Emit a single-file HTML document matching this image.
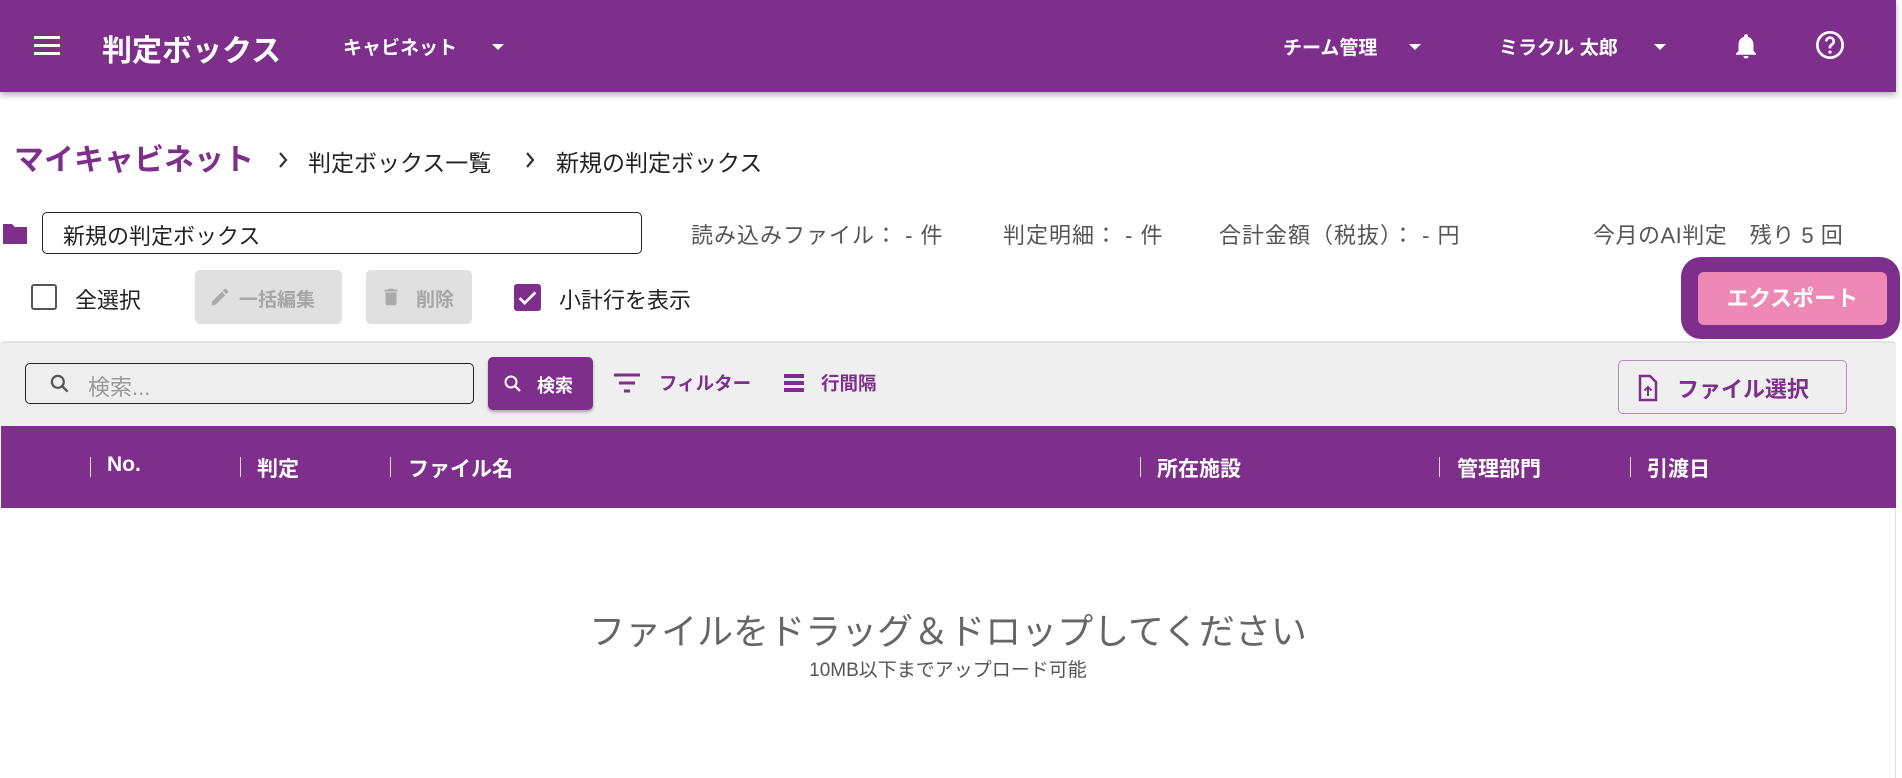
<!DOCTYPE html>
<html><head><meta charset="utf-8"><style>
*{margin:0;padding:0;box-sizing:border-box}
body{width:1902px;height:778px;overflow:hidden;background:#fff;font-family:"Liberation Sans","Noto Sans CJK JP",sans-serif;color:#222;position:relative}
.a{position:absolute;white-space:nowrap}
.hdr{position:absolute;left:0;top:0;width:1896px;height:92px;background:#7e2f8b;box-shadow:0 3px 6px rgba(0,0,0,.3)}
.w{color:#fff;font-weight:bold}
.caret{position:absolute;width:0;height:0;border-left:6px solid transparent;border-right:6px solid transparent;border-top:6px solid #fff}
.g{color:#555;font-size:22px;letter-spacing:1px}
.btn{position:absolute;background:#e0e0e0;border-radius:5px;color:#a6a6a6;font-size:19px;font-weight:bold}
.sep{position:absolute;top:457px;width:1px;height:20px;background:#e9d8ec}
.th{position:absolute;top:453px;color:#fff;font-weight:bold;font-size:21px}
.chev{position:absolute;top:150px}
</style></head><body>
<div class="hdr"></div>
<div class="a" style="left:34px;top:36px;width:26px;height:3px;background:#fff;box-shadow:0 8px 0 #fff,0 16px 0 #fff"></div>
<div class="a w" style="left:102px;top:26px;font-size:30px">判定ボックス</div>
<div class="a w" style="left:343px;top:33px;font-size:19px">キャビネット</div>
<div class="caret" style="left:492px;top:44px"></div>
<div class="a w" style="left:1283px;top:33px;font-size:19px">チーム管理</div>
<div class="caret" style="left:1409px;top:44px"></div>
<div class="a w" style="left:1499px;top:33px;font-size:19px">ミラクル 太郎</div>
<div class="caret" style="left:1654px;top:44px"></div>
<svg class="a" style="left:1731px;top:31px" width="30" height="30" viewBox="0 0 24 24"><path fill="#fff" d="M12 22c1.1 0 2-.9 2-2h-4c0 1.1.9 2 2 2zm6-6v-5c0-3.070-1.630-5.640-4.500-6.320V4c0-.830-.670-1.500-1.500-1.500s-1.500.670-1.500 1.500v.680C7.640 5.360 6 7.920 6 11v5l-2 2v1h16v-1l-2-2z"/></svg>
<svg class="a" style="left:1814px;top:29px" width="32" height="32" viewBox="0 0 24 24"><circle cx="12" cy="12" r="9.5" fill="none" stroke="#fff" stroke-width="2"/><path d="M9.2 9.3a2.8 2.8 0 1 1 4 2.5c-.9.5-1.2 1-1.2 2v.7" fill="none" stroke="#fff" stroke-width="2"/><circle cx="12" cy="17.3" r="1.2" fill="#fff"/></svg>

<div class="a" style="left:14px;top:135px;font-size:30px;font-weight:bold;color:#7e2f8b">マイキャビネット</div>
<svg class="chev" style="left:276px" width="14" height="20" viewBox="0 0 14 20"><path d="M4 3l6 7-6 7" fill="none" stroke="#333" stroke-width="2.2"/></svg>
<div class="a" style="left:308px;top:144px;font-size:23px;color:#222">判定ボックス一覧</div>
<svg class="chev" style="left:523px" width="14" height="20" viewBox="0 0 14 20"><path d="M4 3l6 7-6 7" fill="none" stroke="#333" stroke-width="2.2"/></svg>
<div class="a" style="left:556px;top:144px;font-size:23px;color:#222">新規の判定ボックス</div>

<svg class="a" style="left:1px;top:222px" width="28" height="24" viewBox="0 0 28 24"><path fill="#7e2f8b" d="M2 2h9l3 3h12v17H2z"/></svg>
<div class="a" style="left:42px;top:212px;width:600px;height:42px;border:1.5px solid #222;border-radius:5px"></div>
<div class="a" style="left:63px;top:219px;font-size:22px">新規の判定ボックス</div>
<div class="a g" style="left:691px;top:218px">読み込みファイル： - 件</div>
<div class="a g" style="left:1003px;top:218px">判定明細： - 件</div>
<div class="a g" style="left:1219px;top:218px">合計金額（税抜）： - 円</div>
<div class="a g" style="left:1593px;top:218px;letter-spacing:0.5px">今月のAI判定　残り 5 回</div>

<div class="a" style="left:31px;top:284px;width:26px;height:26px;border:2.5px solid #555;border-radius:3px"></div>
<div class="a" style="left:75px;top:283px;font-size:22px">全選択</div>
<div class="btn" style="left:195px;top:270px;width:147px;height:54px"><svg class="a" style="left:14px;top:16px" width="22" height="22" viewBox="0 0 24 24"><path fill="#aaa" d="M3 17.25V21h3.75L17.8 9.94l-3.75-3.75L3 17.25zM20.7 7.04a1 1 0 0 0 0-1.41l-2.34-2.34a1 1 0 0 0-1.41 0l-1.83 1.83 3.75 3.75 1.83-1.83z"/></svg><span class="a" style="left:44px;top:15px">一括編集</span></div>
<div class="btn" style="left:366px;top:270px;width:106px;height:54px"><svg class="a" style="left:14px;top:16px" width="22" height="22" viewBox="0 0 24 24"><path fill="#aaa" d="M6 19c0 1.1.9 2 2 2h8c1.1 0 2-.9 2-2V7H6v12zM19 4h-3.5l-1-1h-5l-1 1H5v2h14V4z"/></svg><span class="a" style="left:50px;top:15px">削除</span></div>
<div class="a" style="left:514px;top:284px;width:27px;height:27px;background:#7e2f8b;border-radius:3px"><svg width="27" height="27" viewBox="0 0 24 24"><path d="M5 12.5l4.5 4.5L19 7.5" fill="none" stroke="#fff" stroke-width="2.4"/></svg></div>
<div class="a" style="left:559px;top:283px;font-size:22px">小計行を表示</div>

<div class="a" style="left:1681px;top:257px;width:219px;height:82px;background:#7e2f8b;border-radius:20px"></div>
<div class="a" style="left:1698px;top:272px;width:189px;height:53px;background:#ee88b4;border-radius:6px;color:#fff;font-weight:bold;font-size:22px;text-align:center;line-height:53px">エクスポート</div>

<div class="a" style="left:0;top:341px;width:1896px;height:86px;background:#efefef;border-top:2px solid #e2e2e2;border-radius:4px 4px 0 0"></div>
<div class="a" style="left:25px;top:363px;width:449px;height:41px;border:1.5px solid #222;border-radius:5px"></div>
<svg class="a" style="left:47px;top:371px" width="26" height="26" viewBox="0 0 24 24"><circle cx="10" cy="10" r="5.5" fill="none" stroke="#555" stroke-width="2"/><path d="M14 14l5 5" stroke="#555" stroke-width="2.2"/></svg>
<div class="a" style="left:88px;top:370px;font-size:22px;color:#999">検索...</div>
<div class="a" style="left:488px;top:357px;width:105px;height:53px;background:#7e2f8b;border-radius:5px;box-shadow:0 2px 3px rgba(0,0,0,.3)"></div>
<svg class="a" style="left:501px;top:372px" width="24" height="24" viewBox="0 0 24 24"><circle cx="10" cy="10" r="5.5" fill="none" stroke="#fff" stroke-width="2"/><path d="M14 14l5 5" stroke="#fff" stroke-width="2.2"/></svg>
<div class="a w" style="left:537px;top:372px;font-size:18px">検索</div>
<svg class="a" style="left:613px;top:371px" width="28" height="26" viewBox="0 0 28 26"><path d="M1 4h26M6 12h16M11 20h6" stroke="#7e2f8b" stroke-width="3"/></svg>
<div class="a" style="left:659px;top:370px;font-size:18.5px;font-weight:bold;color:#7e2f8b">フィルター</div>
<svg class="a" style="left:784px;top:373px" width="22" height="22" viewBox="0 0 22 22"><path d="M0 3h20M0 10h20M0 17h20" stroke="#7e2f8b" stroke-width="4"/></svg>
<div class="a" style="left:821px;top:370px;font-size:18.5px;font-weight:bold;color:#7e2f8b">行間隔</div>
<div class="a" style="left:1618px;top:360px;width:229px;height:54px;border:1.5px solid #b98cc2;border-radius:5px"></div>
<svg class="a" style="left:1637px;top:374px" width="22" height="28" viewBox="0 0 22 28"><path d="M3 2h10l6 6v18H3z" fill="none" stroke="#7e2f8b" stroke-width="2.5"/><path d="M11 22v-9M7.5 16.5L11 13l3.5 3.5" fill="none" stroke="#7e2f8b" stroke-width="2"/></svg>
<div class="a" style="left:1677px;top:372px;font-size:22px;font-weight:bold;color:#7e2f8b">ファイル選択</div>

<div class="a" style="left:1px;top:426px;width:1895px;height:82px;background:#7e2f8b;border-radius:0 4px 0 0"></div>
<div class="sep" style="left:90px"></div><div class="th" style="left:107px">No.</div>
<div class="sep" style="left:240px"></div><div class="th" style="left:257px">判定</div>
<div class="sep" style="left:390px"></div><div class="th" style="left:408px">ファイル名</div>
<div class="sep" style="left:1140px"></div><div class="th" style="left:1157px">所在施設</div>
<div class="sep" style="left:1439px"></div><div class="th" style="left:1457px">管理部門</div>
<div class="sep" style="left:1630px"></div><div class="th" style="left:1647px">引渡日</div>
<div class="a" style="left:1895px;top:508px;width:1px;height:270px;background:#e0e0e0"></div>

<div class="a" style="left:0;top:603px;width:1896px;text-align:center;font-size:36px;color:#666">ファイルをドラッグ＆ドロップしてください</div>
<div class="a" style="left:0;top:655px;width:1896px;text-align:center;font-size:19px;color:#555">10MB以下までアップロード可能</div>
</body></html>
